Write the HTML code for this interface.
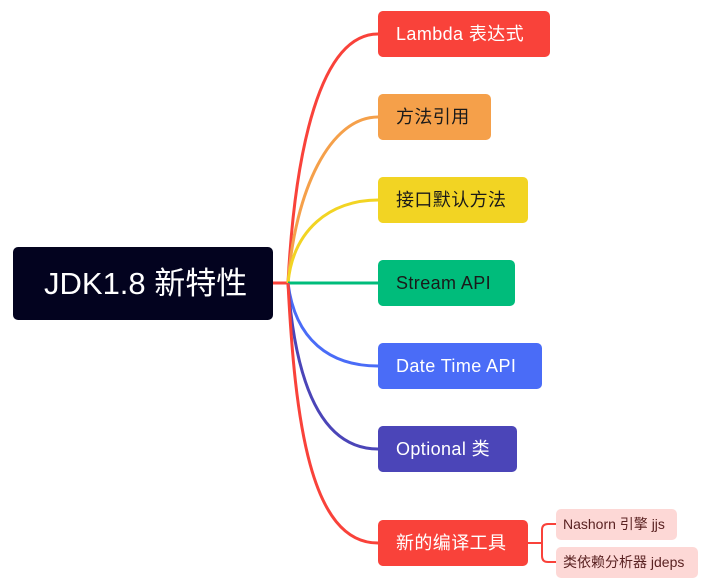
<!DOCTYPE html>
<html><head><meta charset="utf-8"><style>
body{margin:0;width:709px;height:585px;background:#fff;position:relative;overflow:hidden;font-family:"Liberation Sans","Noto Sans CJK SC",sans-serif}
.n{position:absolute;left:378px;height:46px;border-radius:5px;box-sizing:border-box;padding-left:18px;line-height:46px;font-size:18px;letter-spacing:0.4px;white-space:nowrap}
.s{position:absolute;left:556px;height:31px;border-radius:5px;background:#fdd8d6;color:#5a2222;font-size:14px;line-height:31px;padding-left:7px;box-sizing:border-box;white-space:nowrap}
</style></head><body>
<svg width="709" height="585" style="position:absolute;left:0;top:0" fill="none" stroke-width="3">
<path d="M273 283 H288" stroke="#f9423a"/>
<path d="M288 283 C295 150 320 34 378 34" stroke="#f9423a"/>
<path d="M288 283 C295 190 330 117 378 117" stroke="#f5a04a"/>
<path d="M288 283 C293 230 330 200 378 200" stroke="#f2d423"/>
<path d="M288 283 H378" stroke="#00bc7b"/>
<path d="M288 283 C295 340 330 366 378 366" stroke="#4a6cf7"/>
<path d="M288 283 C295 380 320 449 378 449" stroke="#4b45b8"/>
<path d="M288 283 C295 420 310 543 378 543" stroke="#f9423a"/>
<path d="M528 543 H542 M556 524 H548 Q542 524 542 530 V556 Q542 562 548 562 H556" stroke="#f9423a" stroke-width="2"/>
</svg>
<div style="position:absolute;left:13px;top:247px;width:260px;height:73px;background:#03031f;border-radius:5px;color:#fff;font-size:31px;line-height:73px;padding-left:31px;box-sizing:border-box">JDK1.8 新特性</div>
<div class="n" style="top:11px;width:172px;background:#f9423a;color:#fff">Lambda 表达式</div>
<div class="n" style="top:94px;width:113px;background:#f5a04a;color:#1a1a1a">方法引用</div>
<div class="n" style="top:177px;width:150px;background:#f2d423;color:#1a1a1a">接口默认方法</div>
<div class="n" style="top:260px;width:137px;background:#00bc7b;color:#1a1a1a">Stream API</div>
<div class="n" style="top:343px;width:164px;background:#4a6cf7;color:#fff">Date Time API</div>
<div class="n" style="top:426px;width:139px;background:#4b45b8;color:#fff">Optional 类</div>
<div class="n" style="top:520px;width:150px;background:#f9423a;color:#fff">新的编译工具</div>
<div class="s" style="top:509px;width:121px">Nashorn 引擎 jjs</div>
<div class="s" style="top:547px;width:142px">类依赖分析器 jdeps</div>
</body></html>
